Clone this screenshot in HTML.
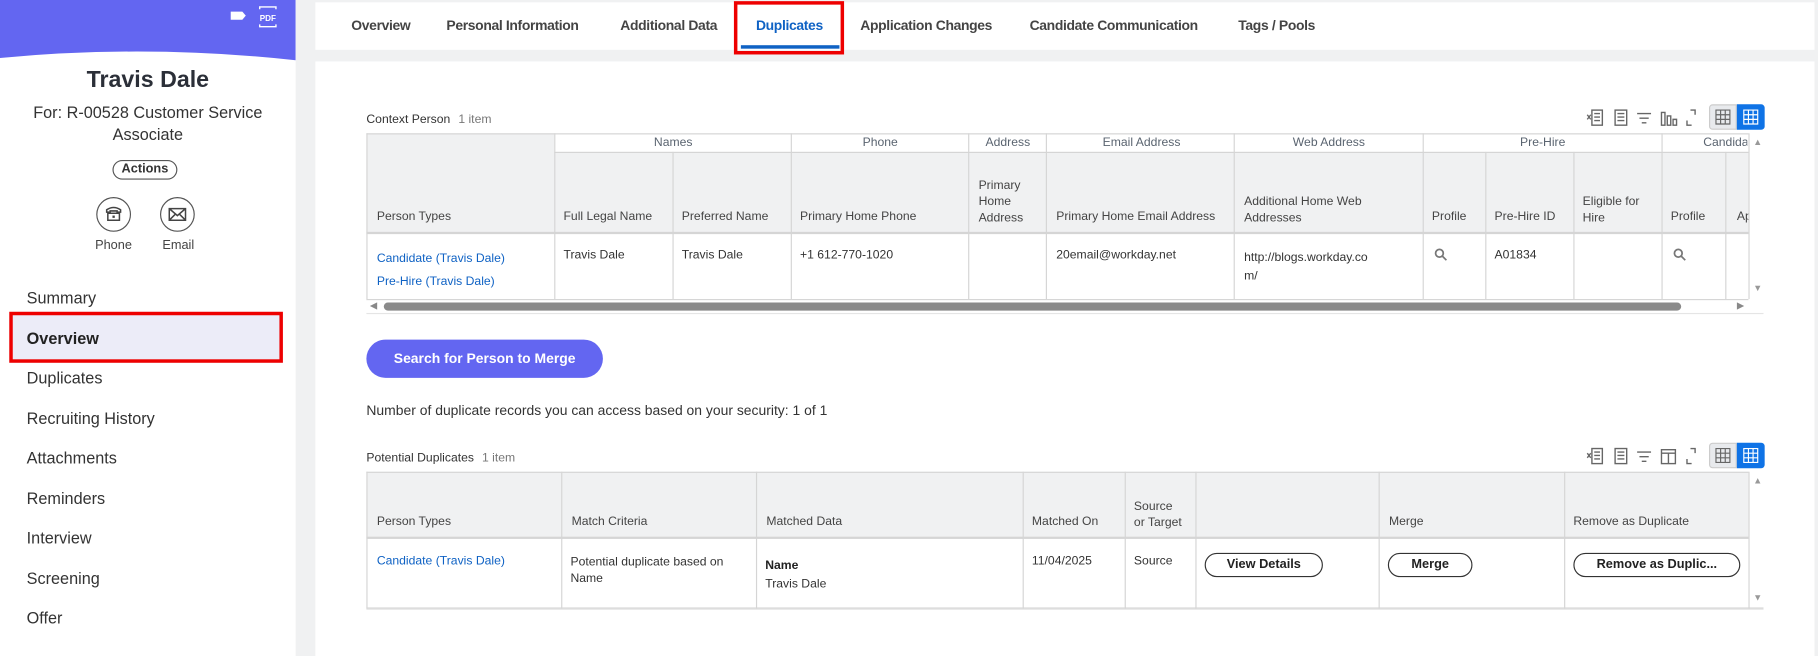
<!DOCTYPE html>
<html><head><meta charset="utf-8">
<style>
*{margin:0;padding:0;box-sizing:border-box}
body{width:1818px;height:656px;overflow:hidden;background:#f0f1f2;font-family:"Liberation Sans",Arial,sans-serif;color:#333}
#w{position:absolute;left:0;top:0;width:1568px;height:566px;transform:scale(1.15944,1.15901);transform-origin:0 0}
.a{position:absolute;white-space:nowrap}
.s{font-size:10.5px;color:#333}
.h{font-size:10.5px;color:#444;background:#f0f1f2}
.lk{color:#0f62c4}
.nav{position:absolute;left:23px;font-size:14px;color:#333}
.tab{position:absolute;top:15px;font-size:12px;font-weight:bold;color:#444;letter-spacing:-.3px}
.vl{position:absolute;width:1px;background:#d5d5d5}
.hl{position:absolute;height:1px;background:#d5d5d5}
.btn{position:absolute;border:1px solid #333;border-radius:11px;font-size:11px;font-weight:bold;text-align:center;line-height:18px;background:#fff;color:#222}
.ic{position:absolute;width:14px;height:14px;border:1.5px solid #666}
</style></head><body><div id="w">
<div class="a" style="left:0;top:0;width:255px;height:566px;background:#fff"></div>
<svg class="a" style="left:0;top:0" width="255" height="62"><path d="M0 0H255V52Q128 38 0 50Z" fill="#6366f1"/>
<path d="M199 10h10l3 3.5-3 3.5h-10z" fill="#fff"/>
<text x="224" y="18" font-size="7" font-weight="bold" fill="#fff" font-family="Liberation Sans">PDF</text>
<path d="M224 8v-2h14v2M224 21v2h14v-2" stroke="#fff" fill="none" stroke-width="1.2"/></svg>
<div class="a" style="left:0;width:255px;top:58px;text-align:center;font-size:20px;font-weight:bold;color:#2b2f38">Travis Dale</div>
<div class="a" style="left:0;width:255px;top:88px;text-align:center;font-size:14px;line-height:19px;color:#333;white-space:normal">For: R-00528 Customer Service<br>Associate</div>
<div class="a" style="left:97px;top:138px;width:56px;height:17px;border:1px solid #555;border-radius:9px;font-size:11px;font-weight:bold;text-align:center;line-height:15px">Actions</div>
<div class="a" style="left:83px;top:170px;width:30px;height:30px;border:1px solid #555;border-radius:50%"></div>
<div class="a" style="left:138px;top:170px;width:30px;height:30px;border:1px solid #555;border-radius:50%"></div>
<svg class="a" style="left:83px;top:170px" width="90" height="30"><path d="M9 11q6-4 12 0v2h-3v-1h-6v1h-3zM10 14h10v6h-10z" fill="none" stroke="#444" stroke-width="1.3"/><rect x="14" y="16" width="2" height="2" fill="#444"/>
<path d="M63 10h14v10h-14zM63 10l7 6 7-6M63 20l5-5M77 20l-5-5" fill="none" stroke="#444" stroke-width="1.3"/></svg>
<div class="a" style="left:82px;top:206px;font-size:11px;color:#444">Phone</div>
<div class="a" style="left:140px;top:206px;font-size:11px;color:#444">Email</div>
<div class="nav" style="top:249px">Summary</div>
<div class="a" style="left:8px;top:269px;width:236px;height:44px;background:#ececf8;border:3px solid #e00"></div>
<div class="nav" style="top:284px;font-weight:bold;color:#222">Overview</div>
<div class="nav" style="top:318px">Duplicates</div>
<div class="nav" style="top:353px">Recruiting History</div>
<div class="nav" style="top:387px">Attachments</div>
<div class="nav" style="top:422px">Reminders</div>
<div class="nav" style="top:456px">Interview</div>
<div class="nav" style="top:491px">Screening</div>
<div class="nav" style="top:525px">Offer</div>
<div class="a" style="left:272px;top:2px;width:1293px;height:41px;background:#fff"></div>
<div class="tab" style="left:303px">Overview</div>
<div class="tab" style="left:385px">Personal Information</div>
<div class="tab" style="left:535px">Additional Data</div>
<div class="tab" style="left:652px;color:#0f62c4">Duplicates</div>
<div class="tab" style="left:742px">Application Changes</div>
<div class="tab" style="left:888px">Candidate Communication</div>
<div class="tab" style="left:1068px">Tags / Pools</div>
<div class="a" style="left:639px;top:39px;width:85px;height:3px;background:#0f62c4"></div>
<div class="a" style="left:633px;top:1px;width:95px;height:46px;border:3px solid #e00"></div>
<div class="a" style="left:272px;top:53px;width:1293px;height:513px;background:#fff"></div>
<div class="a" style="left:316px;top:97px;font-size:10.5px;color:#333">Context Person <span style="color:#777;margin-left:4px">1 item</span></div>
<svg class="a" style="left:1368px;top:94px" width="104" height="16"><g fill="none" stroke="#666" stroke-width="1.2"><rect x="5" y="1" width="9" height="13"/><path d="M7 4h5M7 7h5M7 10h5M1 5l3 4M4 5l-3 4"/><rect x="25" y="1" width="10" height="13"/><path d="M27 4h6M27 7h6M27 10h6"/><path d="M44 4h12M46 8h8M48 12h4"/><path d="M65 3h3v11h-3zM70 6h3v8h-3zM75 9h3v5h-3z"/><path d="M87 10v4h4M94 5v-4h-4"/></g></svg>
<div class="a" style="left:1474px;top:90px;width:24px;height:22px;background:#e8eaed;border:1px solid #ccc;border-radius:3px 0 0 3px"></div>
<div class="a" style="left:1498px;top:90px;width:24px;height:22px;background:#0f73e6;border-radius:0 3px 3px 0"></div>
<svg class="a" style="left:1479px;top:94px" width="42" height="14"><path d="M1 1h12v12h-12zM1 5h12M1 9h12M5 1v12M9 1v12" stroke="#666" fill="none"/><path d="M25 1h12v12h-12zM25 5h12M25 9h12M29 1v12M33 1v12" stroke="#fff" fill="none"/></svg>
<div class="a" style="left:316px;top:115px;width:1192px;height:85px;background:#f0f1f2"></div>
<div class="a" style="left:478px;top:115px;width:1030px;height:16px;background:#fff"></div>
<div class="a" style="left:1508px;top:115px;width:14px;height:143px;background:#fff"></div>
<div class="hl" style="left:316px;top:115px;width:1192px"></div>
<div class="hl" style="left:478px;top:131px;width:1030px"></div>
<div class="hl" style="left:316px;top:200px;width:1192px;height:2px"></div>
<div class="hl" style="left:316px;top:258px;width:1192px"></div>
<div class="vl" style="left:316px;top:115px;height:143px"></div>
<div class="vl" style="left:478px;top:115px;height:143px"></div>
<div class="vl" style="left:580px;top:131px;height:127px"></div>
<div class="vl" style="left:682px;top:115px;height:143px"></div>
<div class="vl" style="left:835px;top:115px;height:143px"></div>
<div class="vl" style="left:902px;top:115px;height:143px"></div>
<div class="vl" style="left:1064px;top:115px;height:143px"></div>
<div class="vl" style="left:1227px;top:115px;height:143px"></div>
<div class="vl" style="left:1281px;top:131px;height:127px"></div>
<div class="vl" style="left:1357px;top:131px;height:127px"></div>
<div class="vl" style="left:1433px;top:115px;height:143px"></div>
<div class="vl" style="left:1488px;top:131px;height:127px"></div>
<div class="a" style="left:1508px;top:115px;width:1px;height:143px;background:#d5d5d5"></div>
<div class="a h" style="left:564px;top:117px;background:none;color:#5a6470">Names</div>
<div class="a h" style="left:744px;top:117px;background:none;color:#5a6470">Phone</div>
<div class="a h" style="left:850px;top:117px;background:none;color:#5a6470">Address</div>
<div class="a h" style="left:951px;top:117px;background:none;color:#5a6470">Email Address</div>
<div class="a h" style="left:1115px;top:117px;background:none;color:#5a6470">Web Address</div>
<div class="a h" style="left:1311px;top:117px;background:none;color:#5a6470">Pre-Hire</div>
<div class="a h" style="left:1469px;top:117px;background:none;color:#5a6470;width:38px;overflow:hidden">Candidate</div>
<div class="a h" style="left:325px;top:181px;background:none">Person Types</div>
<div class="a h" style="left:486px;top:181px;background:none">Full Legal Name</div>
<div class="a h" style="left:588px;top:181px;background:none">Preferred Name</div>
<div class="a h" style="left:690px;top:181px;background:none">Primary Home Phone</div>
<div class="a h" style="left:844px;top:153px;background:none;line-height:14px">Primary<br>Home<br>Address</div>
<div class="a h" style="left:911px;top:181px;background:none">Primary Home Email Address</div>
<div class="a h" style="left:1073px;top:167px;background:none;line-height:14px">Additional Home Web<br>Addresses</div>
<div class="a h" style="left:1235px;top:181px;background:none">Profile</div>
<div class="a h" style="left:1289px;top:181px;background:none">Pre-Hire ID</div>
<div class="a h" style="left:1365px;top:167px;background:none;line-height:14px">Eligible for<br>Hire</div>
<div class="a h" style="left:1441px;top:181px;background:none">Profile</div>
<div class="a h" style="left:1498px;top:181px;background:none;width:10px;overflow:hidden">Ap</div>
<div class="a s lk" style="left:325px;top:213px;line-height:20px">Candidate (Travis Dale)<br>Pre-Hire (Travis Dale)</div>
<div class="a s" style="left:486px;top:214px">Travis Dale</div>
<div class="a s" style="left:588px;top:214px">Travis Dale</div>
<div class="a s" style="left:690px;top:214px">+1 612-770-1020</div>
<div class="a s" style="left:911px;top:214px">20email@workday.net</div>
<div class="a s" style="left:1073px;top:214px;line-height:16px">http://blogs.workday.co<br>m/</div>
<svg class="a" style="left:1237px;top:214px" width="220" height="12"><g fill="none" stroke="#777" stroke-width="1.5"><circle cx="4.5" cy="4.5" r="3.3"/><path d="M7 7l3.5 3.5"/><circle cx="210.5" cy="4.5" r="3.3"/><path d="M213 7l3.5 3.5"/></g></svg>
<div class="a s" style="left:1289px;top:214px">A01834</div>
<div class="a" style="left:1512px;top:118px;font-size:8px;color:#999">▲</div>
<div class="a" style="left:1512px;top:244px;font-size:8px;color:#999">▼</div>
<div class="a" style="left:319px;top:259px;font-size:8px;color:#888">◀</div>
<div class="a" style="left:1498px;top:259px;font-size:8px;color:#888">▶</div>
<div class="a" style="left:331px;top:261px;width:1119px;height:7px;background:#8a8a8a;border-radius:4px"></div>
<div class="hl" style="left:316px;top:270px;width:1205px;background:#e5e5e5"></div>
<div class="a" style="left:316px;top:293px;width:204px;height:33px;background:#6366f1;border-radius:17px;color:#fff;font-size:12px;font-weight:bold;text-align:center;line-height:33px">Search for Person to Merge</div>
<div class="a" style="left:316px;top:347px;font-size:12px;color:#333">Number of duplicate records you can access based on your security: 1 of 1</div>
<div class="a" style="left:316px;top:389px;font-size:10.5px;color:#333">Potential Duplicates <span style="color:#777;margin-left:4px">1 item</span></div>
<svg class="a" style="left:1368px;top:386px" width="104" height="16"><g fill="none" stroke="#666" stroke-width="1.2"><rect x="5" y="1" width="9" height="13"/><path d="M7 4h5M7 7h5M7 10h5M1 5l3 4M4 5l-3 4"/><rect x="25" y="1" width="10" height="13"/><path d="M27 4h6M27 7h6M27 10h6"/><path d="M44 4h12M46 8h8M48 12h4"/><rect x="65" y="2" width="12" height="12"/><path d="M65 5h12M71 5v9"/><path d="M87 10v4h4M94 5v-4h-4"/></g></svg>
<div class="a" style="left:1474px;top:382px;width:24px;height:22px;background:#e8eaed;border:1px solid #ccc;border-radius:3px 0 0 3px"></div>
<div class="a" style="left:1498px;top:382px;width:24px;height:22px;background:#0f73e6;border-radius:0 3px 3px 0"></div>
<svg class="a" style="left:1479px;top:386px" width="42" height="14"><path d="M1 1h12v12h-12zM1 5h12M1 9h12M5 1v12M9 1v12" stroke="#666" fill="none"/><path d="M25 1h12v12h-12zM25 5h12M25 9h12M29 1v12M33 1v12" stroke="#fff" fill="none"/></svg>
<div class="a" style="left:316px;top:407px;width:1192px;height:56px;background:#f0f1f2"></div>
<div class="hl" style="left:316px;top:407px;width:1192px"></div>
<div class="hl" style="left:316px;top:463px;width:1192px;height:2px"></div>
<div class="hl" style="left:316px;top:524px;width:1205px;height:2px;background:#ddd"></div>
<div class="vl" style="left:316px;top:407px;height:118px"></div>
<div class="vl" style="left:484px;top:407px;height:118px"></div>
<div class="vl" style="left:652px;top:407px;height:118px"></div>
<div class="vl" style="left:882px;top:407px;height:118px"></div>
<div class="vl" style="left:970px;top:407px;height:118px"></div>
<div class="vl" style="left:1031px;top:407px;height:118px"></div>
<div class="vl" style="left:1189px;top:407px;height:118px"></div>
<div class="vl" style="left:1349px;top:407px;height:118px"></div>
<div class="vl" style="left:1508px;top:407px;height:118px"></div>
<div class="a h" style="left:325px;top:444px;background:none">Person Types</div>
<div class="a h" style="left:493px;top:444px;background:none">Match Criteria</div>
<div class="a h" style="left:661px;top:444px;background:none">Matched Data</div>
<div class="a h" style="left:890px;top:444px;background:none">Matched On</div>
<div class="a h" style="left:978px;top:430px;background:none;line-height:14px">Source<br>or Target</div>
<div class="a h" style="left:1198px;top:444px;background:none">Merge</div>
<div class="a h" style="left:1357px;top:444px;background:none">Remove as Duplicate</div>
<div class="a s lk" style="left:325px;top:478px">Candidate (Travis Dale)</div>
<div class="a s" style="left:492px;top:478px;line-height:14px">Potential duplicate based on<br>Name</div>
<div class="a s" style="left:660px;top:482px;font-weight:bold;color:#222">Name</div>
<div class="a s" style="left:660px;top:498px">Travis Dale</div>
<div class="a s" style="left:890px;top:478px">11/04/2025</div>
<div class="a s" style="left:978px;top:478px">Source</div>
<div class="btn" style="left:1039px;top:477px;width:102px;height:21px">View Details</div>
<div class="btn" style="left:1197px;top:477px;width:73px;height:21px">Merge</div>
<div class="btn" style="left:1357px;top:477px;width:144px;height:21px">Remove as Duplic...</div>
<div class="a" style="left:1512px;top:410px;font-size:8px;color:#999">▲</div>
<div class="a" style="left:1512px;top:511px;font-size:8px;color:#999">▼</div>
</div></body></html>
